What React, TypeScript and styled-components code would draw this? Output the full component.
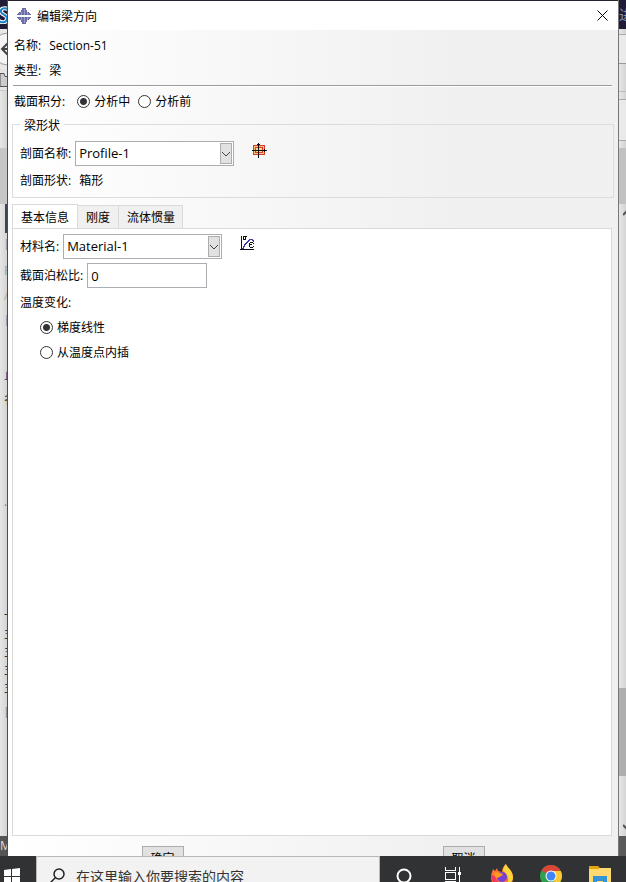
import React, { useState } from "react";
import styled, { createGlobalStyle } from "styled-components";

const GlobalStyle = createGlobalStyle`
  *, *::before, *::after { box-sizing: border-box; }
  body { margin: 0; overflow: hidden; background: #e4e4e4; }
  body, button, input, select {
    font-family: "Open Sans", "Noto Sans CJK SC", sans-serif;
    font-size: 12px;
    color: #000;
  }
`;

const Desktop = styled.div`
  height: 100vh;
  display: grid;
  grid-template-rows: minmax(0, 1fr) 26px;
`;

const Workspace = styled.div`
  display: grid;
  grid-template-columns: 8px minmax(0, 1fr) 8px;
  overflow: hidden;
`;

const Strip = styled.div<{ $side: "left" | "right" }>`
  display: flex;
  flex-direction: column;
  overflow: hidden;
  background: linear-gradient(to right, #e6e6e6, #d4d4d4);
  border-right: ${(p) => (p.$side === "left" ? "1px solid #4c4c4c" : "0")};
  border-left: ${(p) => (p.$side === "right" ? "1px solid #777" : "0")};
`;

const Slice = styled.div<{ $height?: number; $fill?: string; $line?: string; $ink?: string; $size?: number; $end?: boolean }>`
  flex: ${(p) => (p.$height ? `0 0 ${p.$height}px` : "1 1 0")};
  display: flex;
  align-items: center;
  justify-content: flex-start;
  padding-left: ${(p) => (p.$end ? 4 : 0)}px;
  overflow: hidden;
  white-space: nowrap;
  background: ${(p) => p.$fill ?? "transparent"};
  border-bottom: ${(p) => (p.$line ? `1px solid ${p.$line}` : "0")};
  color: ${(p) => p.$ink ?? "#333"};
  font-size: ${(p) => p.$size ?? 12}px;
  line-height: 1;
  svg { flex: none; }
`;

const Bar = styled.div`
  width: 2px;
  height: 100%;
  margin-left: auto;
  background: #3c4658;
`;

const Dialog = styled.section`
  display: flex;
  flex-direction: column;
  min-height: 0;
  overflow: hidden;
  border-top: 1px solid #25222e;
  background: linear-gradient(to right, #ffffff, #f0f0f0 75%);
`;

const TitleBar = styled.header`
  flex: none;
  height: 29px;
  display: flex;
  align-items: center;
  gap: 5px;
  padding: 0 9px 0 8px;
  background: #fff;
`;

const Title = styled.h1`
  flex: 1;
  margin: 0;
  font-size: 12px;
  font-weight: 400;
`;

const CloseButton = styled.button`
  display: grid;
  place-items: center;
  width: 14px;
  height: 20px;
  padding: 0;
  border: 0;
  background: none;
`;

const Body = styled.form`
  flex: 1;
  min-height: 0;
  display: flex;
  flex-direction: column;
  padding: 3px 4px 0;
`;

const Row = styled.div<{ $inset?: number; $gap?: number; $top?: number }>`
  flex: none;
  height: 25px;
  display: flex;
  align-items: center;
  gap: ${(p) => p.$gap ?? 4}px;
  padding-left: ${(p) => p.$inset ?? 0}px;
  margin-top: ${(p) => p.$top ?? 0}px;
  line-height: 16px;
`;

const RadioSet = styled.div`
  display: flex;
  gap: 8px;
`;

const Divider = styled.hr`
  flex: none;
  width: auto;
  height: 2px;
  margin: 2px 2px 2px 1px;
  border: 0;
  border-top: 1px solid #9c9c9c;
  border-bottom: 1px solid #fff;
`;

const Group = styled.fieldset`
  flex: none;
  min-width: 0;
  margin: 2px 0 0;
  padding: 9px 7px 4px;
  border: 1px solid #dcdcdc;
`;

const Legend = styled.legend`
  height: 16px;
  padding: 0 4px;
  line-height: 20px;
`;

const RadioLabel = styled.label`
  display: flex;
  align-items: center;
  gap: 4px;
`;

const Radio = styled.input.attrs({ type: "radio" })`
  appearance: none;
  flex: none;
  width: 13px;
  height: 13px;
  margin: 0;
  border: 1px solid #333;
  border-radius: 50%;
  background: #fff;
  &:checked { background: radial-gradient(circle, #333 0 3px, #fff 4px); }
`;

const Combo = styled.div`
  flex: none;
  width: 159px;
  height: 25px;
  display: grid;
  grid-template-columns: 1fr 12px 1px;
  align-items: center;
  border: 1px solid #abadb3;
  background: #fff;
`;

const ComboSelect = styled.select`
  grid-area: 1 / 1 / 2 / 4;
  appearance: none;
  width: 100%;
  height: 23px;
  padding: 0 14px 2px 3px;
  border: 0;
  background: transparent;
  font-size: 13px;
  outline: none;
`;

const ComboArrow = styled.span`
  grid-area: 1 / 2 / 2 / 3;
  display: grid;
  place-items: center;
  height: 21px;
  border: 1px solid #adadad;
  background: #e1e1e1;
  pointer-events: none;
`;

const TextField = styled.input`
  width: 120px;
  height: 25px;
  padding: 0 3px;
  border: 1px solid #abadb3;
  background: #fff;
  font-size: 13px;
  outline: none;
`;

const IconButton = styled.button`
  display: grid;
  place-items: center;
  align-self: flex-start;
  height: 18px;
  margin-left: 13px;
  padding: 0;
  border: 0;
  background: none;
`;

const Tabs = styled.div`
  flex: none;
  display: flex;
  align-items: flex-end;
  height: 25px;
  margin: 6px 0 -1px;
`;

const Tab = styled.button<{ $active: boolean }>`
  height: ${(p) => (p.$active ? 25 : 24)}px;
  padding: 2px 8px 0;
  margin-right: ${(p) => (p.$active ? 0 : -1)}px;
  border: 1px solid #dadada;
  border-left-width: ${(p) => (p.$active ? 1 : 0)}px;
  border-bottom-color: ${(p) => (p.$active ? "#fff" : "#dadada")};
  background: ${(p) => (p.$active ? "#fff" : "#f0f0f0")};
  line-height: 16px;
  & + & + & {
    padding: 2px 7px 0 8px;
    border-left-width: 1px;
  }
`;

const Panel = styled.div`
  flex: 1;
  min-height: 0;
  margin-right: 2px;
  padding: 5px 7px;
  border: 1px solid #dadada;
  background: #fff;
`;

const Footer = styled.footer`
  flex: none;
  height: 20px;
  display: flex;
  justify-content: space-around;
  padding: 10px 0 0;
  overflow: hidden;
`;

const FooterButton = styled.button`
  width: 42px;
  height: 25px;
  padding: 0;
  border: 1px solid #adadad;
  background: #e1e1e1;
  line-height: 23px;
`;

const TaskBar = styled.nav`
  display: grid;
  grid-template-columns: 36px minmax(0, 344fr) minmax(0, 246fr);
  align-items: start;
  overflow: hidden;
  background: #303234;
`;

const StartButton = styled.button`
  display: block;
  height: 40px;
  padding: 0 0 0 4px;
  border: 0;
  background: none;
  svg { display: block; }
`;

const Search = styled.label`
  height: 40px;
  display: flex;
  align-items: center;
  gap: 11px;
  padding-left: 13px;
  border: 1px solid #b8b8b8;
  background: #f2f2f2;
`;

const SearchInput = styled.input`
  flex: 1;
  min-width: 0;
  height: 38px;
  padding: 0;
  border: 0;
  background: none;
  font-size: 14px;
  outline: none;
  &::placeholder { color: #333; opacity: 1; }
`;

const Apps = styled.div`
  height: 40px;
  display: flex;
  align-items: center;
  justify-content: space-between;
  padding: 0 14px 0 12px;
`;

const AppButton = styled.button`
  display: grid;
  place-items: center;
  width: 24px;
  height: 40px;
  padding: 0;
  border: 0;
  background: none;
`;

const Chevron = () => (
  <svg width="10" height="6" viewBox="0 0 10 6" fill="none" stroke="#444">
    <path d="M1 1l4 4 4-4" />
  </svg>
);

const AppLogo = () => (
  <svg width="16" height="16" viewBox="0 0 16 16" shapeRendering="crispEdges">
    <path d="M6 0h4v2h1v2h2v1h1v1h1v1H1V6h1V5h1V4h2V2h1z" fill="#6c6eaa" />
    <path d="M1 9h14v1h-1v1h-1v1h-2v2h-1v2H6v-2H5v-2H3v-1H2v-1H1z" fill="#6c6eaa" />
    <path d="M5 4h1v3H5zM8 1h1v6H8zM11 4h1v3h-1zM5 9h1v3H5zM8 9h1v6H8zM11 9h1v3h-1z" fill="#9a9bca" />
  </svg>
);

const ProfileIcon = () => (
  <svg width="16" height="16" viewBox="0 0 16 16" shapeRendering="crispEdges">
    <path d="M2 3h12v10H2z" fill="#d93a32" />
    <path d="M3 4h10v8H3z" fill="#f8c070" />
    <path d="M4 5h8v6H4z" fill="#d93a32" />
    <path d="M5 6h6v4H5z" fill="#f8d890" />
    <path d="M7 1h1v15H7zM1 8h15v1H1zM6 2h3v1H6zM13 7h1v3h-1z" fill="#111" />
  </svg>
);

const MaterialIcon = () => (
  <svg width="16" height="15" viewBox="0 0 16 15" fill="none" shapeRendering="crispEdges">
    <path d="M2.500 0v14M1 13.500h14" stroke="#111" />
    <path d="M3 12h1v-2h1V8h1V7h1V6h1V5h1V4h1V3h3v1h1v1h1" stroke="#3b3baa" />
    <path d="M4 .5h4M4.500 1v2.500M5 3.500h2M6.500 1v2.500" stroke="#111" />
    <path d="M11 6.500h3M10.500 7v4M11 8.500h2M11 11.500h3M14.500 7v1M14.500 10v1" stroke="#111" />
  </svg>
);

const Firefox = () => (
  <svg width="24" height="24" viewBox="0 0 24 24">
    <path d="M2 8l1-3 2 2 2-3 1 3 4 1c0-4 2-6 4-8 1 4 7 6 7 14a11 10 0 0 1-22 0c0-2 0-4 1-6z" fill="#ff7139" />
    <path d="M13 7c0-3 1-5 3-7 1 4 7 6 7 14-1 5-4 8-8 9 5-5 4-12-2-16z" fill="#ffd43b" />
    <path d="M1 11c0 7 5 12 12 12 4 0 7-2 9-6-5 5-15 4-17-5z" fill="#f3365d" />
    <circle cx="12" cy="13" r="5" fill="#7440d8" />
    <path d="M4 9c3-2 5 0 9 1-1 3-4 2-5 4-3 0-4-3-4-5z" fill="#ff9a1f" />
  </svg>
);

const Chrome = () => (
  <svg width="22" height="22" viewBox="0 0 22 22">
    <circle cx="11" cy="11" r="11" fill="#2da14d" />
    <path d="M11 11L1.500 5.500A11 11 0 0 1 20.500 5.500z" fill="#db4437" />
    <path d="M11 6h9.800A11 11 0 0 1 11 22l4.500-8.500z" fill="#fbc934" />
    <circle cx="11" cy="11" r="5.500" fill="#fff" />
    <circle cx="11" cy="11" r="4.500" fill="#4285f4" />
  </svg>
);

const Explorer = () => (
  <svg width="22" height="20" viewBox="0 0 22 20">
    <path d="M0 0h9l2 2h11v17H0z" fill="#e5a50a" />
    <path d="M0 3h9l2-1h11v17H0z" fill="#ffd970" />
    <path d="M4 19v-9h14v9h-4v-4H8v4z" fill="#3593d8" />
  </svg>
);

const TaskView = () => (
  <svg width="18" height="18" viewBox="0 0 18 18" fill="none" stroke="#fff" shapeRendering="crispEdges">
    <path d="M1.500 0v3.500h10V0M1.500 18v-3.500h10V18M1.500 5.500h10v7h-10zM15.500 0v18" />
    <path d="M14 5h3v3h-3z" fill="#fff" stroke="none" />
  </svg>
);

const pageLines: React.ComponentProps<typeof Slice>[] = [
  { $height: 24, $ink: "#9a9a9a", children: "目" },
  { $height: 28, $ink: "#8aa0bb", children: "R" },
  { $height: 22, $ink: "#c0a890", children: "/" },
  { $height: 28, $ink: "#8f94b4", children: "日" },
  { $height: 28 },
  { $height: 26, $ink: "#1f3d78", children: "止" },
  { $height: 22, children: "名" },
  { $height: 88 },
  { $height: 14, $ink: "#777", children: "·" },
  { $height: 94 },
  { $height: 18, children: "一" },
  { $height: 18, children: "主" },
  { $height: 18, children: "主" },
  { $height: 18, children: "主" },
  { $height: 18, children: "主" },
  { $height: 32, $ink: "#8c8c8c", children: "目" },
];

export default function App() {
  const tabs = ["基本信息", "刚度", "流体惯量"];
  const [tab, setTab] = useState(0);
  const [poisson, setPoisson] = useState("0");

  return (
    <>
      <GlobalStyle />
      <Desktop>
        <Workspace>
          <Strip $side="left" aria-hidden="true">
            <Slice $height={29} $fill="#201c38">
              <svg width="7" height="18" viewBox="0 0 7 18" fill="none">
                <path d="M8 3C4 1 0 3 1 6s7 3 6 7-5 4-8 2" stroke="#fff" strokeWidth="4" />
                <path d="M8 3C4 1 0 3 1 6s7 3 6 7-5 4-8 2" stroke="#1681c4" strokeWidth="2" />
              </svg>
            </Slice>
            <Slice $height={40} $fill="#e8e8e8">
              <svg width="8" height="40" viewBox="0 0 8 40" fill="none">
                <circle cx="8" cy="20" r="16" fill="#f4f4f4" stroke="#999" />
                <path d="M8 14l-6 6 6 6M2 20h6" stroke="#444" strokeWidth="2" />
              </svg>
            </Slice>
            <Slice $height={22} $fill="#e4e4e4" $line="#c8c8c8">
              <svg width="8" height="16" viewBox="0 0 8 16" fill="#ccc" stroke="#555">
                <path d="M0 14.500V1.500h4l1 3h4v10z" />
              </svg>
            </Slice>
            <Slice $height={57} />
            <Slice $height={56} $fill="#c6c6c6" />
            <Slice $height={29}>
              <Bar />
            </Slice>
            {pageLines.map((line, i) => (
              <Slice key={i} $end {...line} />
            ))}
            <Slice />
            <Slice $height={20} $fill="#555" $ink="#ddd">M</Slice>
          </Strip>

          <Dialog role="dialog" aria-labelledby="dialog-title">
            <TitleBar>
              <AppLogo />
              <Title id="dialog-title">编辑梁方向</Title>
              <CloseButton aria-label="关闭">
                <svg width="11" height="11" viewBox="0 0 11 11" stroke="#000">
                  <path d="M.5.5l10 10M10.500.5l-10 10" />
                </svg>
              </CloseButton>
            </TitleBar>

            <Body onSubmit={(e) => e.preventDefault()}>
              <Row $inset={2} $gap={8}>
                <span>名称:</span>
                <span>Section-51</span>
              </Row>
              <Row $inset={2} $gap={8}>
                <span>类型:</span>
                <span>梁</span>
              </Row>
              <Divider />
              <Row $inset={2} $gap={12} role="radiogroup" aria-label="截面积分">
                <span>截面积分:</span>
                <RadioSet>
                  <RadioLabel>
                    <Radio name="integration" defaultChecked />
                    分析中
                  </RadioLabel>
                  <RadioLabel>
                    <Radio name="integration" />
                    分析前
                  </RadioLabel>
                </RadioSet>
              </Row>

              <Group>
                <Legend>梁形状</Legend>
                <Row>
                  <label htmlFor="profile">剖面名称:</label>
                  <Combo>
                    <ComboSelect id="profile">
                      <option>Profile-1</option>
                    </ComboSelect>
                    <ComboArrow><Chevron /></ComboArrow>
                  </Combo>
                  <IconButton type="button" aria-label="创建梁剖面"><ProfileIcon /></IconButton>
                </Row>
                <Row $top={2} $gap={8}>
                  <span>剖面形状:</span>
                  <span>箱形</span>
                </Row>
              </Group>

              <Tabs role="tablist">
                {tabs.map((name, i) => (
                  <Tab
                    key={name}
                    type="button"
                    role="tab"
                    aria-selected={tab === i}
                    $active={tab === i}
                    onClick={() => setTab(i)}
                  >
                    {name}
                  </Tab>
                ))}
              </Tabs>
              <Panel role="tabpanel">
                <Row>
                  <label htmlFor="material">材料名:</label>
                  <Combo>
                    <ComboSelect id="material">
                      <option>Material-1</option>
                    </ComboSelect>
                    <ComboArrow><Chevron /></ComboArrow>
                  </Combo>
                  <IconButton type="button" aria-label="创建材料"><MaterialIcon /></IconButton>
                </Row>
                <Row $top={4}>
                  <label htmlFor="poisson">截面泊松比:</label>
                  <TextField id="poisson" value={poisson} onChange={(e) => setPoisson(e.target.value)} />
                </Row>
                <Row $top={2}>温度变化:</Row>
                <Row $inset={20}>
                  <RadioLabel>
                    <Radio name="temperature" defaultChecked />
                    梯度线性
                  </RadioLabel>
                </Row>
                <Row $inset={20}>
                  <RadioLabel>
                    <Radio name="temperature" />
                    从温度点内插
                  </RadioLabel>
                </Row>
              </Panel>
              <Footer>
                <FooterButton type="submit">确定</FooterButton>
                <FooterButton type="button">取消</FooterButton>
              </Footer>
            </Body>
          </Dialog>

          <Strip $side="right" aria-hidden="true">
            <Slice $height={29} $fill="#201c38" $ink="#8795b8" $size={14}>进</Slice>
            <Slice $height={6} $line="#aaa" />
            <Slice $height={29} $fill="#eaeaea" $line="#999" />
            <Slice $height={28} $line="#bbb" />
            <Slice $height={8} $line="#aaa" />
            <Slice $height={41} $fill="#eaeaea" $line="#aaa" />
            <Slice $height={7} />
            <Slice $height={56} $fill="#c2c2c2" />
            <Slice $height={18} $end>
              <svg width="8" height="6" viewBox="0 0 8 6" fill="none" stroke="#555" strokeWidth="2"><path d="M0 5l4-4 4 4" /></svg>
            </Slice>
            <Slice />
            <Slice $height={88} $fill="#aeaeae" />
            <Slice $height={42} />
            <Slice $height={18} $end>
              <svg width="8" height="6" viewBox="0 0 8 6" fill="none" stroke="#555" strokeWidth="2"><path d="M0 1l4 4 4-4" /></svg>
            </Slice>
            <Slice $height={20} $fill="#5a5a5a" />
          </Strip>
        </Workspace>

        <TaskBar>
          <StartButton aria-label="开始">
            <svg width="17" height="16" viewBox="0 0 17 16" fill="#fff">
              <path d="M0 2l7-1v7H0zM8 1l8-1v8H8zM0 9h7v6l-7-1zM8 9h8v7l-8-1z" />
            </svg>
          </StartButton>
          <Search>
            <svg width="15" height="16" viewBox="0 0 15 16" fill="none" stroke="#222" strokeWidth="1.500">
              <circle cx="9" cy="6" r="5" />
              <path d="M5.500 9.500L0 15" />
            </svg>
            <SearchInput aria-label="搜索" placeholder="在这里输入你要搜索的内容" />
          </Search>
          <Apps>
            <AppButton aria-label="Cortana">
              <svg width="16" height="16" viewBox="0 0 16 16" fill="none" stroke="#fff" strokeWidth="2"><circle cx="8" cy="8" r="6.500" /></svg>
            </AppButton>
            <AppButton aria-label="任务视图"><TaskView /></AppButton>
            <AppButton aria-label="Firefox"><Firefox /></AppButton>
            <AppButton aria-label="Chrome"><Chrome /></AppButton>
            <AppButton aria-label="文件资源管理器"><Explorer /></AppButton>
          </Apps>
        </TaskBar>
      </Desktop>
    </>
  );
}
